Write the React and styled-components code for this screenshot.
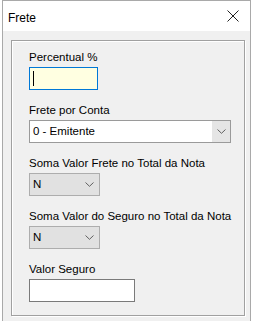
import React from "react";
import styled, { createGlobalStyle } from "styled-components";

const GlobalStyle = createGlobalStyle`
  html, body { margin: 0; padding: 0; background: #ffffff; }
  body { font-family: "Liberation Sans", Arial, sans-serif; color: #000; }
  * { box-sizing: border-box; }
`;

const Window = styled.div`
  margin-left: 2px;
  width: 249px;
  height: 321px;
  border: 1px solid #a9a9a9;
  display: flex;
  flex-direction: column;
  background: #fff;
`;

const TitleBar = styled.div`
  height: 30px;
  flex: none;
  display: flex;
  align-items: center;
  justify-content: space-between;
  padding: 3px 11px 0 5px;
  background: #ffffff;
`;

const Title = styled.span`
  font-size: 12px;
  line-height: 14px;
  color: #000;
`;

const CloseIcon = styled.svg`
  width: 12px;
  height: 12px;
  display: block;
  margin-top: -3px;
`;

const Body = styled.div`
  flex: 1;
  background: #f0f0f0;
  padding: 9px 5px 8px 8px;
  display: flex;
`;

const GroupBox = styled.div`
  flex: 1;
  border: 1px solid #a0a0a0;
  box-shadow: 1px 1px 0 #ffffff, inset 1px 1px 0 #ffffff;
  padding: 9px 10px 0 17px;
  display: flex;
  flex-direction: column;
`;

const Field = styled.div`
  display: flex;
  flex-direction: column;
  align-items: flex-start;
  margin-bottom: 13px;
`;

const Label = styled.label`
  font-size: 11.5px;
  line-height: 14px;
  margin-bottom: 3px;
  color: #000;
  white-space: nowrap;
`;

const TextBox = styled.div`
  width: ${(p) => p.$width}px;
  height: 23px;
  border: 1px solid ${(p) => (p.$focused ? "#0078d7" : "#7a7a7a")};
  background: ${(p) => (p.$focused ? "#ffffe1" : "#ffffff")};
  display: flex;
  align-items: center;
  padding-left: 3px;
`;

const Caret = styled.span`
  width: 1px;
  height: 15px;
  background: #000;
`;

const Combo = styled.div`
  width: ${(p) => p.$width}px;
  height: 23px;
  border: 1px solid ${(p) => (p.$editable ? "#9a9a9a" : "#adadad")};
  background: ${(p) => (p.$editable ? "#ffffff" : "#e1e1e1")};
  display: flex;
  align-items: stretch;
`;

const ComboText = styled.span`
  flex: 1;
  font-size: 11.5px;
  line-height: 21px;
  padding-left: 3px;
  color: #000;
`;

const DropButton = styled.span`
  width: ${(p) => (p.$editable ? 18 : 20)}px;
  flex: none;
  display: flex;
  align-items: center;
  justify-content: center;
  background: ${(p) => (p.$editable ? "#e5e5e5" : "transparent")};
  border-left: ${(p) => (p.$editable ? "1px solid #e5e5e5" : "none")};
`;

const Chevron = () => (
  <svg width="9" height="5" viewBox="0 0 9 5" style={{ display: "block" }}>
    <path d="M0.5 0.5 L4.5 4.3 L8.5 0.5" fill="none" stroke="#606060" strokeWidth="1" />
  </svg>
);

const ComboBox = ({ width, value, editable }) => (
  <Combo $width={width} $editable={editable}>
    <ComboText>{value}</ComboText>
    <DropButton $editable={editable}>
      <Chevron />
    </DropButton>
  </Combo>
);

export default function App() {
  return (
    <>
      <GlobalStyle />
      <Window>
        <TitleBar>
          <Title>Frete</Title>
          <CloseIcon viewBox="0 0 12 12">
            <path d="M0.5 0.5 L11.5 11.5 M11.5 0.5 L0.5 11.5" stroke="#222" strokeWidth="1" fill="none" />
          </CloseIcon>
        </TitleBar>
        <Body>
          <GroupBox>
            <Field>
              <Label>Percentual %</Label>
              <TextBox $width={69} $focused>
                <Caret />
              </TextBox>
            </Field>
            <Field>
              <Label>Frete por Conta</Label>
              <ComboBox width={202} value="0 - Emitente" editable />
            </Field>
            <Field>
              <Label>Soma Valor Frete no Total da Nota</Label>
              <ComboBox width={71} value="N" />
            </Field>
            <Field>
              <Label>Soma Valor do Seguro no Total da Nota</Label>
              <ComboBox width={71} value="N" />
            </Field>
            <Field>
              <Label>Valor Seguro</Label>
              <TextBox $width={106} />
            </Field>
          </GroupBox>
        </Body>
      </Window>
    </>
  );
}
